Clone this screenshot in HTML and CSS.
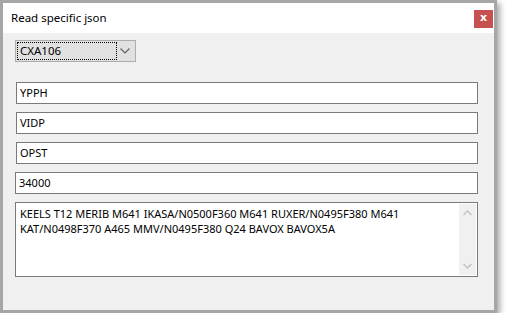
FILE: index.html
```html
<!DOCTYPE html>
<html>
<head>
    <title>Read specific json</title>
    <link rel="stylesheet" href="styles.css">
</head>
<body>
    <div class="window">
        <div class="titlebar">
            <span class="title">Read specific json</span>
            <button class="close" type="button">x</button>
        </div>
        <div class="content">
            <div class="select">
                <span class="select-value">CXA106</span>
                <svg class="chevron" width="10" height="6" viewBox="0 0 10 6">
                    <path d="M0.5 0.5 L5 5 L9.5 0.5" fill="none" stroke="#606060" stroke-width="1.2"/>
                </svg>
            </div>
            <div class="fields">
                <div class="field">YPPH</div>
                <div class="field">VIDP</div>
                <div class="field">OPST</div>
                <div class="field field-wide">34000</div>
                <div class="memo">
                    <div class="memo-text">KEELS T12 MERIB M641 IKASA/N0500F360 M641 RUXER/N0495F380 M641 KAT/N0498F370 A465 MMV/N0495F380 Q24 BAVOX BAVOX5A</div>
                    <div class="scrollbar">
                        <svg width="9" height="6" viewBox="0 0 9 6"><path d="M0.5 5 L4.5 1 L8.5 5" fill="none" stroke="#c2c2c2" stroke-width="1.3"/></svg>
                        <svg width="9" height="6" viewBox="0 0 9 6"><path d="M0.5 1 L4.5 5 L8.5 1" fill="none" stroke="#c2c2c2" stroke-width="1.3"/></svg>
                    </div>
                </div>
            </div>
        </div>
    </div>
</body>
</html>
```

FILE: styles.css
```css
body {
    margin: 0;
    background-color: white;
    font-family: "Noto Sans", "Open Sans", sans-serif;
    font-size: 11px;
    color: black;
}
.window {
    width: 491px;
    height: 307px;
    border: 3px solid #a6a6a6;
    background-color: #f0f0f0;
    box-shadow: 3px 3px 6px rgba(0, 0, 0, 0.35);
    display: flex;
    flex-direction: column;
}
.titlebar {
    height: 30px;
    background-color: white;
    display: flex;
    align-items: center;
    justify-content: space-between;
    padding: 0 1px 0 8px;
}
.title {
    font-size: 11.5px;
    margin-top: -2px;
}
.close {
    width: 19px;
    height: 18px;
    margin-top: 2px;
    border: none;
    padding: 0 0 3px 0;
    background-color: #c75050;
    color: white;
    font-family: "DejaVu Sans", sans-serif;
    font-weight: bold;
    font-size: 11px;
    line-height: 12px;
}
.content {
    padding: 7px 0 0 12px;
}
.select {
    width: 115px;
    height: 20px;
    border: 1px solid #adadad;
    background-color: #e1e1e1;
    display: flex;
    align-items: center;
    justify-content: space-between;
    padding-right: 4px;
    box-sizing: content-box;
}
.select-value {
    height: 16px;
    width: 96px;
    margin-left: 1px;
    padding-left: 2px;
    border: 1px dotted black;
    line-height: 16px;
    font-size: 11.5px;
}
.chevron {
    margin-right: 1px;
}
.fields {
    margin-top: 20px;
    display: flex;
    flex-direction: column;
    gap: 8px;
}
.field {
    width: 457px;
    height: 20px;
    margin-left: 1px;
    border: 1px solid #7a7a7a;
    background-color: white;
    padding-left: 3px;
    line-height: 20px;
}
.field-wide {
    width: 458px;
    margin-left: 0;
}
.memo {
    width: 461px;
    height: 73px;
    border: 1px solid #7a7a7a;
    background-color: white;
    display: flex;
}
.memo-text {
    flex: 1;
    padding: 3px 4px;
    line-height: 15px;
}
.scrollbar {
    width: 17px;
    margin: 1px 1px 1px 0;
    background-color: #f0f0f0;
    display: flex;
    flex-direction: column;
    justify-content: space-between;
    align-items: center;
    padding: 6px 0 6px;
}
```
